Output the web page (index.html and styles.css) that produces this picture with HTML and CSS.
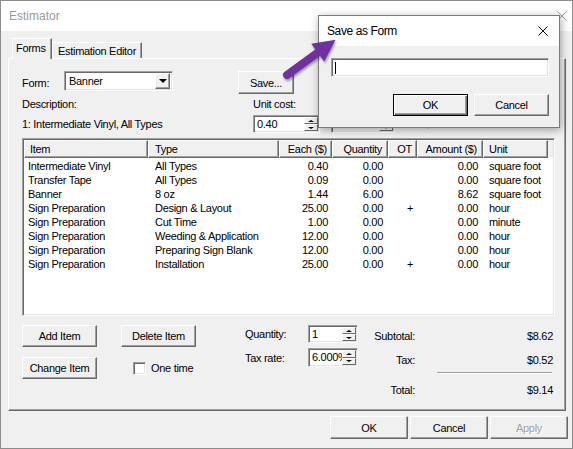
FILE: index.html
```html
<!DOCTYPE html>
<html lang="en">
<head>
    <meta charset="UTF-8">
    <title>Estimator</title>
    <link rel="stylesheet" href="styles.css">
</head>
<body>
    <div class="window">
        <!-- Title bar (inactive, behind the dialog) -->
        <div class="titlebar">
            <span class="title">Estimator</span>
            <svg class="close" width="10" height="10" viewBox="0 0 10 10">
                <path d="M0.5 0.5 L9.5 9.5 M9.5 0.5 L0.5 9.5" stroke="#9a9a9a" stroke-width="1"/>
            </svg>
        </div>

        <div class="tabs">
            <div class="tab active">Forms</div>
            <div class="tab">Estimation Editor</div>
        </div>

        <div class="panel">
            <div class="form-row">
                <span class="form-label">Form:</span>
                <div class="combo">
                    <span class="combo-text">Banner</span>
                    <span class="combo-btn"><span class="arrow-down"></span></span>
                </div>
                <button class="btn save-btn">Save...</button>
            </div>

            <div class="desc-grid">
                <span>Description:</span>
                <span>Unit cost:</span>
                <span></span>
                <span></span>
                <span>1: Intermediate Vinyl, All Types</span>
                <div class="spin unit-spin">
                    <span class="spin-text">0.40</span>
                    <span class="spin-btns"><span class="spin-up"></span><span class="spin-down"></span></span>
                </div>
                <div class="spin spin-disabled">
                    <span class="spin-text">0.000</span>
                    <span class="spin-btns"><span class="spin-up"></span><span class="spin-down"></span></span>
                </div>
                <span class="muted">$0.00</span>
            </div>

            <div class="list">
                <div class="list-row list-head">
                    <span>Item</span>
                    <span>Type</span>
                    <span class="num">Each ($)</span>
                    <span class="num">Quantity</span>
                    <span class="num">OT</span>
                    <span class="num">Amount ($)</span>
                    <span>Unit</span>
                </div>
                <div class="list-body" id="list-body"></div>
            </div>

            <div class="bottom">
                <div class="actions">
                    <button class="btn">Add Item</button>
                    <button class="btn">Delete Item</button>
                    <button class="btn">Change Item</button>
                    <label class="check"><span class="check-box"></span>One time</label>
                </div>

                <div class="qty">
                    <span>Quantity:</span>
                    <div class="spin qty-spin">
                        <span class="spin-text">1</span>
                        <span class="spin-btns"><span class="spin-up"></span><span class="spin-down"></span></span>
                    </div>
                    <span>Tax rate:</span>
                    <div class="spin qty-spin tax-spin">
                        <span class="spin-text">6.000%</span>
                        <span class="spin-btns"><span class="spin-up"></span><span class="spin-down"></span></span>
                    </div>
                </div>

                <div class="totals">
                    <div class="total-row subtotal"><span class="total-label">Subtotal:</span><span class="total-value">$8.62</span></div>
                    <div class="total-row tax"><span class="total-label">Tax:</span><span class="total-value">$0.52</span></div>
                    <div class="total-line"></div>
                    <div class="total-row total"><span class="total-label">Total:</span><span class="total-value">$9.14</span></div>
                </div>
            </div>
        </div>

        <div class="footer">
            <button class="btn foot-btn">OK</button>
            <button class="btn foot-btn">Cancel</button>
            <button class="btn foot-btn disabled">Apply</button>
        </div>
    </div>

    <!-- Save as Form dialog -->
    <div class="popup">
        <div class="popup-title">
            <span>Save as Form</span>
            <svg class="popup-close" width="10" height="10" viewBox="0 0 10 10">
                <path d="M0.5 0.5 L9.5 9.5 M9.5 0.5 L0.5 9.5" stroke="#000" stroke-width="1"/>
            </svg>
        </div>
        <div class="popup-body">
            <div class="field popup-input"><span class="caret"></span></div>
            <div class="popup-buttons">
                <button class="btn default-btn">OK</button>
                <button class="btn">Cancel</button>
            </div>
        </div>
    </div>

    <!-- Callout arrow -->
    <svg class="callout" width="573" height="449" viewBox="0 0 573 449">
        <g transform="translate(287 75) rotate(-36)">
            <line x1="0" y1="0" x2="42" y2="0" stroke="#7030a0" stroke-width="8" stroke-linecap="round"/>
            <polygon points="38,-11 60,0 38,11" fill="#7030a0"/>
        </g>
    </svg>

    <script>
        const rows = [
            ['Intermediate Vinyl', 'All Types', '0.40', '0.00', '', '0.00', 'square foot'],
            ['Transfer Tape', 'All Types', '0.09', '0.00', '', '0.00', 'square foot'],
            ['Banner', '8 oz', '1.44', '6.00', '', '8.62', 'square foot'],
            ['Sign Preparation', 'Design & Layout', '25.00', '0.00', '+', '0.00', 'hour'],
            ['Sign Preparation', 'Cut Time', '1.00', '0.00', '', '0.00', 'minute'],
            ['Sign Preparation', 'Weeding & Application', '12.00', '0.00', '', '0.00', 'hour'],
            ['Sign Preparation', 'Preparing Sign Blank', '12.00', '0.00', '', '0.00', 'hour'],
            ['Sign Preparation', 'Installation', '25.00', '0.00', '+', '0.00', 'hour']
        ];

        const body = document.getElementById('list-body');
        rows.forEach(function (r) {
            const row = document.createElement('div');
            row.className = 'list-row';
            r.forEach(function (val, i) {
                const cell = document.createElement('span');
                if (i >= 2 && i <= 5) cell.className = 'num';
                cell.textContent = val;
                row.appendChild(cell);
            });
            body.appendChild(row);
        });
    </script>
</body>
</html>
```

FILE: styles.css
```css
body {
    margin: 0;
    font-family: "Liberation Sans", Arial, sans-serif;
    font-size: 11px;
    letter-spacing: -0.3px;
    color: #000;
    background: #fff;
}

.window {
    width: 573px;
    height: 449px;
    box-sizing: border-box;
    border: 1px solid #8c8c8c;
    background: #f0f0f0;
    display: flex;
    flex-direction: column;
}

.titlebar {
    height: 30px;
    flex-shrink: 0;
    background: #fff;
    display: flex;
    align-items: center;
    justify-content: space-between;
    padding: 0 5px 0 8px;
}

.title {
    font-size: 12px;
    letter-spacing: 0;
    color: #999;
}

/* tabs */
.tabs {
    display: flex;
    align-items: flex-end;
    height: 20px;
    margin: 7px 0 0 11px;
}

.tab {
    height: 16px;
    box-sizing: border-box;
    padding: 1px 5px 0 5px;
    line-height: 14px;
    border: 1px solid;
    border-color: #fff #696969 transparent #fff;
    border-bottom: none;
    box-shadow: inset -1px 0 #a0a0a0;
}

.tab.active {
    height: 21px;
    width: 40px;
    padding: 2px 3px 0 3px;
    margin-bottom: -1px;
    position: relative;
    z-index: 1;
    background: #f0f0f0;
}

.panel {
    height: 353px;
    box-sizing: border-box;
    margin: 0 6px 0 7px;
    border: 1px solid;
    border-color: #fff #696969 #696969 #fff;
    box-shadow: inset -1px -1px #a0a0a0;
    padding: 12px 10px 0 13px;
}

/* common controls */
.btn {
    font: inherit;
    letter-spacing: inherit;
    color: #000;
    background: #f0f0f0;
    border: 1px solid;
    border-color: #fff #696969 #696969 #fff;
    box-shadow: inset -1px -1px #a0a0a0;
    padding: 0;
    height: 22px;
}

.field, .combo, .spin {
    box-sizing: border-box;
    background: #fff;
    border: 1px solid;
    border-color: #a0a0a0 #fff #fff #a0a0a0;
    box-shadow: inset 1px 1px #696969, inset -1px -1px #e3e3e3;
}

.form-row {
    display: flex;
    align-items: center;
    height: 23px;
}

.form-label {
    width: 42px;
}

.combo {
    align-self: flex-start;
    width: 109px;
    height: 20px;
    display: flex;
    align-items: center;
    justify-content: space-between;
    padding: 2px;
}

.combo-text {
    padding-left: 2px;
}

.combo-btn {
    width: 15px;
    height: 16px;
    box-sizing: border-box;
    background: #f0f0f0;
    border: 1px solid;
    border-color: #fff #696969 #696969 #fff;
    box-shadow: inset -1px -1px #a0a0a0;
    display: flex;
    align-items: center;
    justify-content: center;
}

.arrow-down {
    width: 0;
    height: 0;
    border-left: 4px solid transparent;
    border-right: 4px solid transparent;
    border-top: 4px solid #000;
}

.save-btn {
    width: 56px;
    height: 23px;
    margin-left: 65px;
}

.desc-grid {
    display: grid;
    grid-template-columns: 231px 78px 94px auto;
    grid-template-rows: 14px 18px;
    row-gap: 4px;
    align-items: center;
    margin-top: 3px;
    line-height: 14px;
}

.spin {
    height: 18px;
    display: flex;
    align-items: stretch;
    justify-content: space-between;
    padding: 1px 1px 1px 2px;
}

.spin-text {
    flex: 1;
    min-width: 0;
    overflow: hidden;
    white-space: nowrap;
    line-height: 14px;
    padding-left: 1px;
}

.spin-btns {
    width: 14px;
    flex-shrink: 0;
    display: flex;
    flex-direction: column;
}

.spin-up, .spin-down {
    flex: 1;
    box-sizing: border-box;
    background: #f0f0f0;
    border: 1px solid;
    border-color: #fff #696969 #696969 #fff;
    display: flex;
    align-items: center;
    justify-content: center;
}

.spin-up::after {
    content: "";
    border-left: 3px solid transparent;
    border-right: 3px solid transparent;
    border-bottom: 2px solid #000;
}

.spin-down::after {
    content: "";
    border-left: 3px solid transparent;
    border-right: 3px solid transparent;
    border-top: 2px solid #000;
}

.unit-spin {
    width: 67px;
}

.spin-disabled {
    width: 64px;
    background: #f0f0f0;
    color: #a0a0a0;
}

.spin-disabled .spin-up::after {
    border-bottom-color: #a0a0a0;
}

.spin-disabled .spin-down::after {
    border-top-color: #a0a0a0;
}

.muted {
    color: #a0a0a0;
}

/* list view */
.list {
    margin-top: 5px;
    height: 178px;
    box-sizing: border-box;
    background: #fff;
    border: 1px solid;
    border-color: #a0a0a0 #fff #fff #a0a0a0;
    box-shadow: inset 1px 1px #696969, inset -1px -1px #e3e3e3;
    padding: 1px;
}

.list-row {
    display: grid;
    grid-template-columns: 124px 131px 53px 56px 29px 66px 65px;
    height: 14px;
    line-height: 14px;
    white-space: nowrap;
}

.list-row span {
    padding-left: 4px;
    overflow: hidden;
}

.list-row span:nth-child(2) {
    padding-left: 7px;
}

.list-row span:nth-child(7) {
    padding-left: 6px;
}

.list-row .num {
    text-align: right;
    padding-left: 0;
    padding-right: 5px;
}

.list-row .num:nth-child(3),
.list-row .num:nth-child(5) {
    padding-right: 4px;
}

.list-head {
    height: 18px;
    line-height: 16px;
    background: #f0f0f0;
}

.list-head span {
    box-sizing: border-box;
    border: 1px solid;
    border-color: #fff #696969 #696969 #fff;
    box-shadow: inset -1px -1px #a0a0a0;
    padding-left: 5px;
}

.list-head span:nth-child(2) {
    padding-left: 6px;
}

.list-head span:nth-child(7) {
    padding-left: 5px;
}

.list-body {
    padding-top: 1px;
}

/* bottom area */
.bottom {
    display: flex;
    align-items: flex-start;
    margin-top: 9px;
}

.actions {
    display: grid;
    grid-template-columns: 75px 75px;
    grid-template-rows: 22px 22px;
    column-gap: 24px;
    row-gap: 10px;
}

.check {
    display: flex;
    align-items: center;
    margin-left: 12px;
}

.check-box {
    width: 13px;
    height: 13px;
    box-sizing: border-box;
    background: #fff;
    border: 1px solid;
    border-color: #a0a0a0 #fff #fff #a0a0a0;
    box-shadow: inset 1px 1px #696969, inset -1px -1px #e3e3e3;
    margin-right: 5px;
}

.qty {
    display: grid;
    grid-template-columns: 63px 50px;
    grid-template-rows: 18px 19px;
    row-gap: 5px;
    align-items: center;
    margin-left: 49px;
}

.qty-spin {
    width: 50px;
}

.tax-spin {
    height: 19px;
}

.totals {
    margin-left: 15px;
    width: 180px;
    margin-top: 4px;
}

.total-row {
    display: flex;
    height: 14px;
    line-height: 14px;
}

.total-label {
    width: 42px;
    text-align: right;
}

.total-value {
    flex: 1;
    text-align: right;
}

.tax {
    margin-top: 10px;
}

.total-line {
    margin: 5px 0 0 64px;
    width: 115px;
    height: 1px;
    background: #a0a0a0;
    border-bottom: 1px solid #fff;
}

.total {
    margin-top: 9px;
}

/* footer */
.footer {
    display: flex;
    justify-content: flex-end;
    gap: 2px;
    margin-top: 5px;
    padding-right: 4px;
}

.foot-btn {
    width: 78px;
    height: 23px;
}

.foot-btn.disabled {
    color: #a0a0a0;
    text-shadow: 1px 1px #fff;
}

/* dialog */
.popup {
    position: absolute;
    left: 318px;
    top: 15px;
    width: 242px;
    height: 113px;
    box-sizing: border-box;
    border: 1px solid #7a7a7a;
    background: #f0f0f0;
    box-shadow: 1px 2px 8px rgba(0, 0, 0, 0.35);
}

.popup-title {
    height: 30px;
    background: #fff;
    display: flex;
    align-items: center;
    justify-content: space-between;
    padding: 0 11px 0 8px;
    font-size: 12px;
    letter-spacing: -0.4px;
}

.popup-body {
    padding: 12px 10px 0 12px;
}

.popup-input {
    width: 218px;
    height: 19px;
    padding: 3px 3px;
}

.caret {
    display: block;
    width: 1px;
    height: 12px;
    background: #000;
}

.popup-buttons {
    display: flex;
    justify-content: flex-end;
    gap: 6px;
    margin-top: 17px;
}

.popup-buttons .btn {
    width: 75px;
    height: 22px;
}

.popup-buttons .default-btn {
    border: 1px solid #000;
    box-shadow: inset 1px 1px #fff, inset -1px -1px #696969, inset -2px -2px #a0a0a0;
}

.callout {
    position: absolute;
    left: 0;
    top: 0;
    pointer-events: none;
    filter: drop-shadow(1px 2px 1px rgba(0, 0, 0, 0.35));
}
```
